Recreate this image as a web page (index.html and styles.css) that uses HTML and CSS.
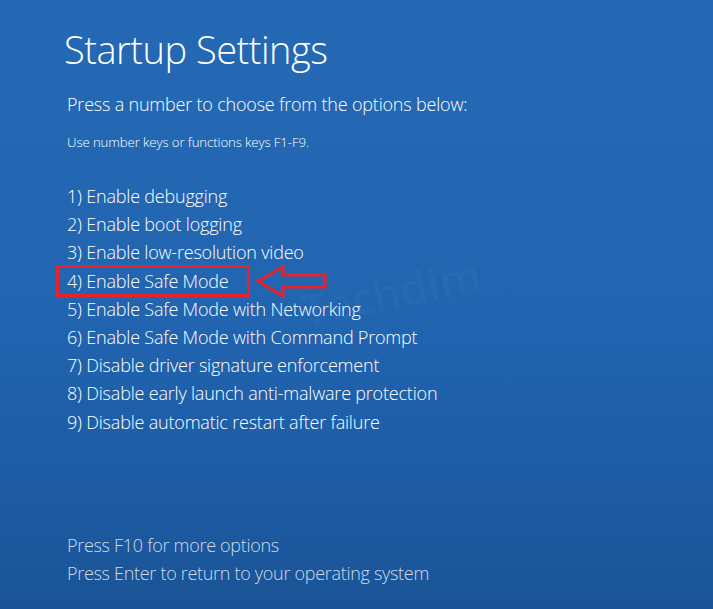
FILE: index.html
```html
<!DOCTYPE html>
<html lang="en">
<head>
  <meta charset="UTF-8">
  <meta name="viewport" content="width=device-width, initial-scale=1.0">
  <title>Startup Settings</title>
  <link rel="stylesheet" href="styles.css">
</head>
<body>
  <div class="screen">
    <h1 class="title">Startup Settings</h1>
    <p class="prompt">Press a number to choose from the options below:</p>
    <p class="hint">Use number keys or functions keys F1-F9.</p>

    <ul class="options">
      <li>1) Enable debugging</li>
      <li>2) Enable boot logging</li>
      <li>3) Enable low-resolution video</li>
      <li class="marked">4) Enable Safe Mode
        <svg class="arrow" width="73" height="35" viewBox="0 0 73 35">
          <path d="M3 17 L28 3 L28 11 L70 11 L70 23 L28 23 L28 32 Z" fill="none" stroke="#e8222b" stroke-width="3" stroke-linejoin="miter"/>
        </svg>
      </li>
      <li>5) Enable Safe Mode with Networking</li>
      <li>6) Enable Safe Mode with Command Prompt</li>
      <li>7) Disable driver signature enforcement</li>
      <li>8) Disable early launch anti-malware protection</li>
      <li>9) Disable automatic restart after failure</li>
    </ul>

    <div class="watermark">Techdim</div>

    <div class="footer">
      <p>Press F10 for more options</p>
      <p>Press Enter to return to your operating system</p>
    </div>
  </div>
</body>
</html>
```

FILE: styles.css
```css
html, body {
  margin: 0;
  height: 100%;
}

body {
  font-family: "Open Sans", "Noto Sans", sans-serif;
  font-weight: 300;
  color: #fff;
  background: linear-gradient(180deg, #2569b5 0%, #2266b2 45%, #1e5da7 75%, #1a5496 100%);
  overflow: hidden;
}

.screen {
  position: relative;
  height: 609px;
  padding: 0 0 0 67px;
  box-sizing: border-box;
}

.title {
  margin: 0;
  padding-top: 24px;
  margin-left: -3px;
  font-size: 38px;
  font-weight: 300;
  line-height: 50px;
  letter-spacing: -0.5px;
}

.prompt {
  margin: 18px 0 0;
  font-size: 18px;
  line-height: 24px;
  letter-spacing: -0.2px;
}

.hint {
  margin: 17px 0 0;
  font-size: 13.2px;
  line-height: 18px;
  letter-spacing: -0.1px;
}

.options {
  list-style: none;
  margin: 31px 0 0;
  padding: 0;
  font-size: 18px;
  line-height: 28.2px;
  letter-spacing: -0.2px;
}

.options li {
  position: relative;
  white-space: nowrap;
}

.marked::before {
  content: "";
  position: absolute;
  left: -11px;
  top: -2px;
  width: 188px;
  height: 26px;
  border: 3px solid #e8222b;
}

.arrow {
  position: absolute;
  left: 188px;
  top: -3px;
}

.watermark {
  position: absolute;
  left: 300px;
  top: 262px;
  font-size: 44px;
  font-weight: 600;
  color: rgba(255, 255, 255, 0.035);
  transform: rotate(-12deg);
  pointer-events: none;
}

.footer {
  position: absolute;
  left: 67px;
  top: 531px;
  font-size: 18px;
  line-height: 28px;
  letter-spacing: -0.3px;
  color: #cfdaea;
}

.footer p {
  margin: 0;
}
```
